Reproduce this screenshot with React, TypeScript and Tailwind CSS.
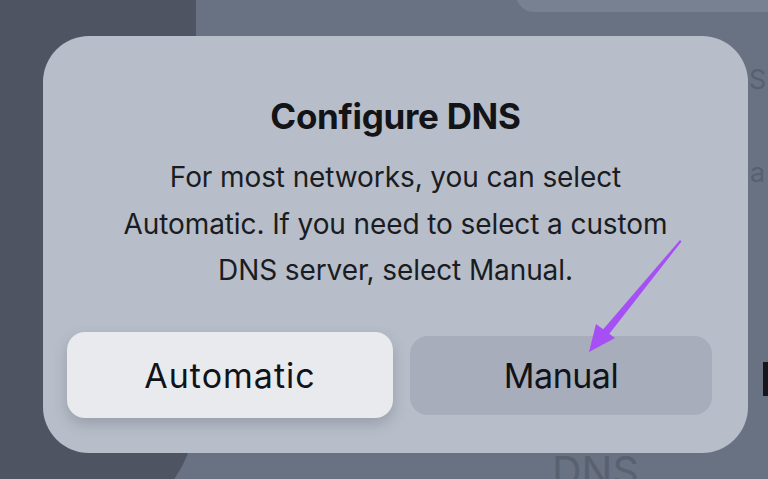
import React from "react";

export default function App() {
  return (
    <div
      className="relative w-[768px] h-[479px] overflow-hidden bg-[#687282]"
      style={{ fontFamily: "Inter, 'Noto Sans', sans-serif" }}
    >
      {/* background decorations */}
      <div className="absolute left-0 top-0 w-[196px] h-[530px] bg-[#4f5462] rounded-br-[120px]" />
      <div className="absolute left-[516px] top-[-40px] w-[300px] h-[52px] bg-[#788191] rounded-[18px]" />
      <div className="absolute left-[749px] top-[60px] text-[27px] text-[#586070]">S</div>
      <div className="absolute left-[750px] top-[153px] text-[27px] text-[#586070]">a</div>
      <div className="absolute left-[763px] top-[362px] w-[6px] h-[34px] bg-[#15171c]" />
      <div className="absolute left-[552px] top-[451px] text-[41px] text-[#596170] leading-none">DNS</div>

      <div className="relative pt-[36px] pl-[43px]">
        <div className="w-[705px] h-[417px] rounded-[46px] bg-[#b7bec9] flex flex-col items-center text-[#121418]">
          <div className="mt-[59px] text-[35px] font-bold leading-[42px] tracking-[-0.3px]">
            Configure DNS
          </div>
          <div className="mt-[17px] text-[28px] leading-[46.5px] text-center text-[#1a1c21] tracking-[-0.1px]">
            <div>For most networks, you can select</div>
            <div>Automatic. If you need to select a custom</div>
            <div>DNS server, select Manual.</div>
          </div>
          <div className="mt-auto mb-[35px] w-full pl-[24px] pr-[36px] flex items-center gap-[17px]">
            <div className="w-[326px] h-[86px] rounded-[18px] bg-[#e8eaee] shadow-[0_6px_14px_rgba(60,66,80,0.25)] flex items-center justify-center text-[34px] tracking-[1px] text-[#111318]">
              Automatic
            </div>
            <div className="flex-1 h-[79px] rounded-[18px] bg-[#a7adba] flex items-center justify-center text-[34px] tracking-[-0.5px] text-[#111318]">
              Manual
            </div>
          </div>
        </div>
      </div>

      {/* purple arrow */}
      <svg className="absolute left-0 top-0" width="768" height="479" viewBox="0 0 768 479">
        <polygon points="680,240 681.5,241.5 606,338 600,333" fill="#a64ff5" />
        <polygon points="589,352 596,324 615,338" fill="#a64ff5" />
      </svg>
    </div>
  );
}
